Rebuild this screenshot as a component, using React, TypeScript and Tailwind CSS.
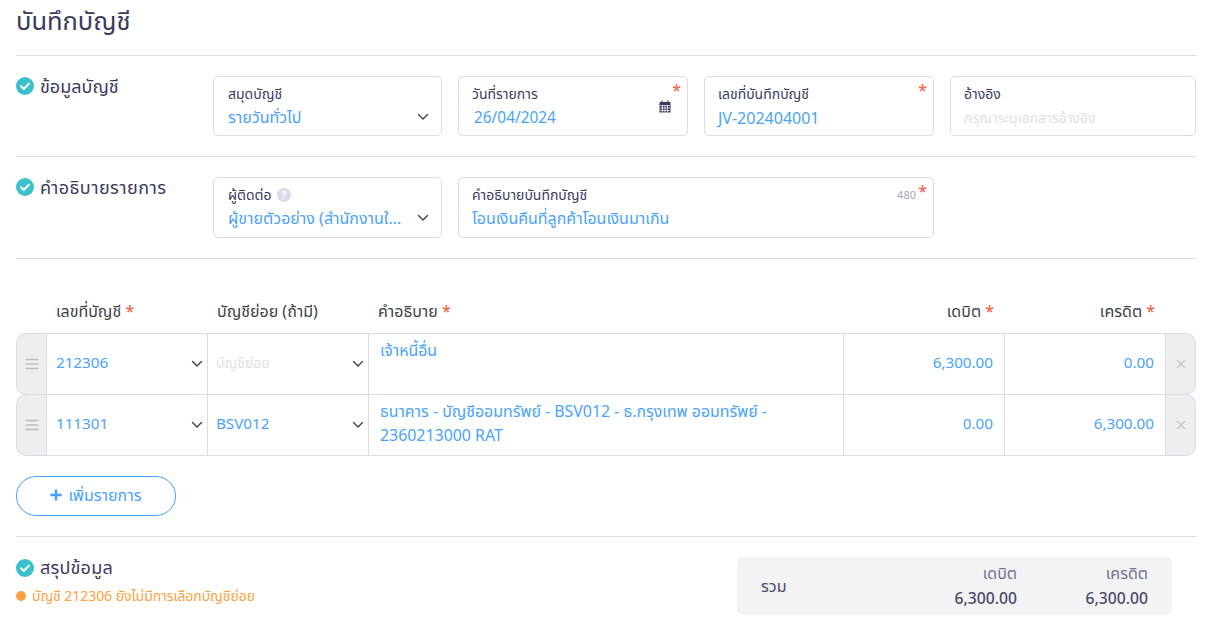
import React from "react";

const CheckBadge = () => (
  <svg width="18" height="18" viewBox="0 0 18 18" className="shrink-0">
    <circle cx="9" cy="9" r="9" fill="#3cc0cc" />
    <path d="M5 9.3l2.8 2.7L13 6.6" fill="none" stroke="#fff" strokeWidth="2" strokeLinecap="round" strokeLinejoin="round" />
  </svg>
);

const Chevron = ({ className = "" }: { className?: string }) => (
  <svg width="12" height="8" viewBox="0 0 12 8" className={className}>
    <path d="M1.5 1.5L6 6l4.5-4.5" fill="none" stroke="#3f3f46" strokeWidth="1.4" strokeLinecap="round" strokeLinejoin="round" />
  </svg>
);

const Star = () => <span className="font-medium text-[#f4664a]">*</span>;

const FieldStar = () => (
  <span className="absolute right-[6px] top-[3px] text-[16px] font-medium leading-[20px] text-[#f4664a]">*</span>
);

const Field = ({ label, children, className = "" }: { label: React.ReactNode; children: React.ReactNode; className?: string }) => (
  <div className={`relative h-[60px] rounded-[5px] border border-[#dddbe8] bg-white pr-[12px] ${className}`}>
    <div className="mt-[7px] h-[20px] text-[14px] leading-[20px] text-[#3b3a5c]">{label}</div>
    {children}
  </div>
);

const Value = ({ children, className = "text-[16px]" }: { children: React.ReactNode; className?: string }) => (
  <div className={`mt-[1px] whitespace-nowrap leading-[24px] text-[#49a3fb] ${className}`}>{children}</div>
);

const Section = ({ title, titleClass = "", children }: { title: string; titleClass?: string; children: React.ReactNode }) => (
  <div className="flex border-b border-[#dddbe8] py-[20px]">
    <div className="flex h-[20px] w-[197px] shrink-0 items-center gap-[6px]">
      <CheckBadge />
      <span className={`text-[18px] leading-[20px] text-[#3b3a5c] ${titleClass}`}>{title}</span>
    </div>
    {children}
  </div>
);

const Drag = () => (
  <div className="flex w-[30px] shrink-0 items-center justify-center rounded-l-[10px] border border-r-0 border-[#dddbe8] bg-[#eeeeee]">
    <svg width="14" height="12" viewBox="0 0 14 12">
      <path d="M0.5 1.5h13M0.5 6h13M0.5 10.5h13" stroke="#bdbdbd" strokeWidth="1.6" />
    </svg>
  </div>
);

const Remove = () => (
  <div className="flex w-[30px] shrink-0 items-center justify-center rounded-r-[10px] border border-l-0 border-[#dddbe8] bg-[#eeeeee]">
    <svg width="10" height="10" viewBox="0 0 10 10">
      <path d="M1 1l8 8M9 1l-8 8" stroke="#c4c4c4" strokeWidth="1.1" />
    </svg>
  </div>
);

const SelectCell = ({ children, muted = false, className = "pl-[8px]" }: { children: React.ReactNode; muted?: boolean; className?: string }) => (
  <div className={`flex w-[161px] shrink-0 items-center justify-between border-r border-[#dddbe8] pr-[4px] ${className}`}>
    <span className={`pb-[4px] ${muted ? "text-[14px] text-[#dfdee8]" : "text-[15.2px] text-[#49a3fb]"}`}>{children}</span>
    <Chevron />
  </div>
);

const NumCell = ({ children }: { children: React.ReactNode }) => (
  <div className="flex w-[161px] shrink-0 items-center justify-end border-r border-[#dddbe8] pb-[4px] pr-[11px] text-[15.2px] text-[#49a3fb]">
    {children}
  </div>
);

const Row = ({ acc, sub, muted, desc, dr, cr, className = "" }: { acc: string; sub: string; muted?: boolean; desc: React.ReactNode; dr: string; cr: string; className?: string }) => (
  <div className={`flex h-[62px] ${className}`}>
    <Drag />
    <div className="flex flex-1 border-y border-l border-[#dddbe8]">
      <SelectCell className="pl-[9px]">{acc}</SelectCell>
      <SelectCell muted={muted}>{sub}</SelectCell>
      <div className="flex-1 border-r border-[#dddbe8] px-[11px] pt-[4px] text-[15.9px] leading-[24px] text-[#49a3fb]">{desc}</div>
      <NumCell>{dr}</NumCell>
      <NumCell>{cr}</NumCell>
    </div>
    <Remove />
  </div>
);

export default function App() {
  return (
    <div className="h-[635px] w-[1213px] overflow-hidden bg-white pl-[16px] pr-[17px] [font-family:'Noto_Sans','Noto_Sans_Thai',Inter,sans-serif]">
      <div className="flex h-[56px] items-start border-b border-[#dddbe8] pt-[2px] text-[25.5px] leading-[36px] text-[#3b3a5c]">
        บันทึกบัญชี
      </div>

      <Section title="ข้อมูลบัญชี">
        <div className="flex flex-1 gap-[16px]">
          <Field label="สมุดบัญชี" className="w-[229px] pl-[14px]">
            <div className="flex items-center justify-between">
              <Value>รายวันทั่วไป</Value>
              <Chevron />
            </div>
          </Field>
          <Field label="วันที่รายการ" className="w-[230px] pl-[13px]">
            <FieldStar />
            <svg width="12" height="13" viewBox="0 0 12 13" className="absolute right-[16px] top-[23px]">
              <path d="M0.5 2h11v10.5h-11z" fill="#3b3a5c" />
              <path d="M3 0.5v2M9 0.5v2" stroke="#3b3a5c" strokeWidth="1.2" />
              <path d="M1 5.5h10M1 8h10M1 10.5h10M3.5 5v7.5M6 5v7.5M8.5 5v7.5" stroke="#fff" strokeWidth="0.7" />
            </svg>
            <Value className="mt-[2px] pl-[2px] text-[15.4px]">26/04/2024</Value>
          </Field>
          <Field label="เลขที่บันทึกบัญชี" className="w-[230px] pl-[13px]">
            <FieldStar />
            <Value className="mt-[2px] text-[16px]">JV-202404001</Value>
          </Field>
          <Field label="อ้างอิง" className="flex-1 pl-[13px]">
            <div className="mt-[2px] text-[14px] leading-[24px] text-[#dfdee8]">กรุณาระบุเอกสารอ้างอิง</div>
          </Field>
        </div>
      </Section>

      <Section title="คำอธิบายรายการ" titleClass="tracking-[0.45px]">
        <div className="flex flex-1 gap-[16px]">
          <Field
            className="h-[61px] w-[229px] pl-[14px]"
            label={
              <span className="flex items-center gap-[5px]">
                ผู้ติดต่อ
                <span className="flex h-[14px] w-[14px] items-center justify-center rounded-full bg-[#dddbe8] text-[10px] font-bold leading-none text-white">?</span>
              </span>
            }
          >
            <div className="flex items-center justify-between">
              <Value>ผู้ขายตัวอย่าง (สำนักงานใ...</Value>
              <Chevron className="shrink-0" />
            </div>
          </Field>
          <Field label="คำอธิบายบันทึกบัญชี" className="h-[61px] w-[476px] pl-[13px]">
            <FieldStar />
            <span className="absolute right-[17px] top-[8px] text-[11px] leading-[18px] text-[#a9a9b4]">480</span>
            <Value>โอนเงินคืนที่ลูกค้าโอนเงินมาเกิน</Value>
          </Field>
        </div>
      </Section>

      <div className="flex h-[74px] items-end pb-[10px] text-[16px] leading-[24px] text-[#3f3f46]">
        <div className="w-[40px] shrink-0" />
        <div className="w-[161px] shrink-0">เลขที่บัญชี <Star /></div>
        <div className="w-[161px] shrink-0">บัญชีย่อย (ถ้ามี)</div>
        <div className="flex-1">คำอธิบาย <Star /></div>
        <div className="w-[151px] shrink-0 text-right">เดบิต <Star /></div>
        <div className="w-[161px] shrink-0 text-right">เครดิต <Star /></div>
        <div className="w-[41px] shrink-0" />
      </div>

      <div className="flex flex-col">
        <Row acc="212306" sub="บัญชีย่อย" muted desc="เจ้าหนี้อื่น" dr="6,300.00" cr="0.00" />
        <Row
          className="-mt-px"
          acc="111301"
          sub="BSV012"
          desc="ธนาคาร - บัญชีออมทรัพย์ - BSV012 - ธ.กรุงเทพ ออมทรัพย์ - 2360213000 RAT"
          dr="0.00"
          cr="6,300.00"
        />
      </div>

      <div className="border-b border-[#dddbe8] py-[20px]">
        <button className="flex h-[40px] w-[160px] items-center justify-center gap-[6px] rounded-[20px] border border-[#44a0f8] pb-[2px] text-[16px] text-[#49a3fb]">
          <svg width="12" height="12" viewBox="0 0 12 12">
            <path d="M6 0.5v11M0.5 6h11" stroke="#44a0f8" strokeWidth="2.4" />
          </svg>
          เพิ่มรายการ
        </button>
      </div>

      <div className="flex justify-between pr-[24px] pt-[20px]">
        <div>
          <div className="flex h-[22px] items-center gap-[6px]">
            <CheckBadge />
            <span className="pb-[2px] text-[18px] leading-[22px] tracking-[0.2px] text-[#3b3a5c]">สรุปข้อมูล</span>
          </div>
          <div className="mt-[8px] flex items-center gap-[6px] text-[14px] leading-[18px] tracking-[-0.05px] text-[#ff9f40]">
            <span className="h-[10px] w-[10px] rounded-full bg-[#ff9f40]" />
            บัญชี 212306 ยังไม่มีการเลือกบัญชีย่อย
          </div>
        </div>
        <div className="flex h-[58px] w-[435px] items-center rounded-[5px] bg-[#f3f3f6] px-[24px] text-[#4a4a6a]">
          <div className="flex-1 text-[16px]">รวม</div>
          <div className="w-[100px] pb-[3px] text-right">
            <div className="text-[16px] leading-[26px] text-[#75748e]">เดบิต</div>
            <div className="text-[15.7px] font-medium leading-[24px]">6,300.00</div>
          </div>
          <div className="ml-[31px] w-[100px] pb-[3px] text-right">
            <div className="text-[16px] leading-[26px] text-[#75748e]">เครดิต</div>
            <div className="text-[15.7px] font-medium leading-[24px]">6,300.00</div>
          </div>
        </div>
      </div>
    </div>
  );
}
